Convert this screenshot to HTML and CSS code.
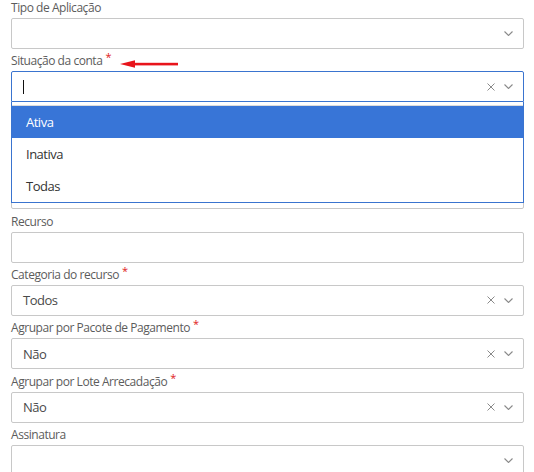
FILE: index.html
```html
<!DOCTYPE html>
<html lang="pt-BR">
<head>
<meta charset="utf-8">
<title>Filtro</title>
<link rel="stylesheet" href="styles.css">
</head>
<body>
<div class="form">
  <div class="field">
    <div class="label">Tipo de Aplicação</div>
    <div class="control">
      <span class="value"></span>
      <svg class="chev" width="9" height="5" viewBox="0 0 9 5"><path d="M0.5 0.5 L4.5 4.5 L8.5 0.5" fill="none" stroke="#8a8a8a" stroke-width="1.1"/></svg>
    </div>
  </div>

  <div class="field open">
    <div class="label">Situação da conta<span class="req">*</span>
      <svg class="arrow" width="60" height="8" viewBox="0 0 60 8"><polygon points="0,4 15,0.3 15,7.7" fill="#e8141b"/><rect x="13" y="2.8" width="45" height="2.6" fill="#e8141b"/></svg>
    </div>
    <div class="select">
      <div class="control focus">
        <span class="value"><span class="caret"></span></span>
        <svg class="x" width="8" height="8" viewBox="0 0 8 8"><path d="M0.5 0.5 L7.5 7.5 M7.5 0.5 L0.5 7.5" stroke="#8a8a8a" stroke-width="1"/></svg>
        <svg class="chev" width="9" height="5" viewBox="0 0 9 5"><path d="M0.5 0.5 L4.5 4.5 L8.5 0.5" fill="none" stroke="#8a8a8a" stroke-width="1.1"/></svg>
      </div>
      <ul class="menu">
        <li class="opt active">Ativa</li>
        <li class="opt">Inativa</li>
        <li class="opt">Todas</li>
      </ul>
    </div>
  </div>

  <div class="field">
    <div class="label"></div>
    <div class="control"></div>
  </div>

  <div class="field">
    <div class="label"></div>
    <div class="control"></div>
  </div>

  <div class="field">
    <div class="label">Recurso</div>
    <div class="control"></div>
  </div>

  <div class="field">
    <div class="label">Categoria do recurso<span class="req">*</span></div>
    <div class="control">
      <span class="value">Todos</span>
      <svg class="x" width="8" height="8" viewBox="0 0 8 8"><path d="M0.5 0.5 L7.5 7.5 M7.5 0.5 L0.5 7.5" stroke="#8a8a8a" stroke-width="1"/></svg>
      <svg class="chev" width="9" height="5" viewBox="0 0 9 5"><path d="M0.5 0.5 L4.5 4.5 L8.5 0.5" fill="none" stroke="#8a8a8a" stroke-width="1.1"/></svg>
    </div>
  </div>

  <div class="field">
    <div class="label">Agrupar por Pacote de Pagamento<span class="req">*</span></div>
    <div class="control">
      <span class="value">Não</span>
      <svg class="x" width="8" height="8" viewBox="0 0 8 8"><path d="M0.5 0.5 L7.5 7.5 M7.5 0.5 L0.5 7.5" stroke="#8a8a8a" stroke-width="1"/></svg>
      <svg class="chev" width="9" height="5" viewBox="0 0 9 5"><path d="M0.5 0.5 L4.5 4.5 L8.5 0.5" fill="none" stroke="#8a8a8a" stroke-width="1.1"/></svg>
    </div>
  </div>

  <div class="field">
    <div class="label">Agrupar por Lote Arrecadação<span class="req">*</span></div>
    <div class="control">
      <span class="value">Não</span>
      <svg class="x" width="8" height="8" viewBox="0 0 8 8"><path d="M0.5 0.5 L7.5 7.5 M7.5 0.5 L0.5 7.5" stroke="#8a8a8a" stroke-width="1"/></svg>
      <svg class="chev" width="9" height="5" viewBox="0 0 9 5"><path d="M0.5 0.5 L4.5 4.5 L8.5 0.5" fill="none" stroke="#8a8a8a" stroke-width="1.1"/></svg>
    </div>
  </div>

  <div class="field">
    <div class="label">Assinatura</div>
    <div class="control">
      <span class="value"></span>
      <svg class="chev" width="9" height="5" viewBox="0 0 9 5"><path d="M0.5 0.5 L4.5 4.5 L8.5 0.5" fill="none" stroke="#8a8a8a" stroke-width="1.1"/></svg>
    </div>
  </div>
</div>
</body>
</html>
```

FILE: styles.css
```css
html, body {
  margin: 0;
  padding: 0;
  background: #fff;
  overflow: hidden;
}

body {
  font-family: "Open Sans", "Noto Sans", "Liberation Sans", sans-serif;
}

.form {
  padding: 0 10px 0 11px;
}

.field {
  margin-bottom: 4.4px;
}

.label {
  position: relative;
  height: 16px;
  line-height: 16px;
  font-size: 12px;
  letter-spacing: -0.45px;
  color: #5c5c5c;
  margin-bottom: 2px;
  white-space: nowrap;
}

.req {
  position: relative;
  top: -4px;
  margin-left: 3px;
  font-size: 11px;
  letter-spacing: 0;
  color: #e02020;
}

.arrow {
  position: absolute;
  left: 109px;
  top: 7px;
}

.control {
  box-sizing: border-box;
  height: 31px;
  border: 1px solid #c8c8c8;
  border-radius: 2px;
  background: #fff;
  display: flex;
  align-items: center;
  padding: 0 10px 0 11px;
}

.control.focus {
  border-color: #3a74cf;
  border-radius: 2px 2px 0 0;
}

.value {
  flex: 1;
  font-size: 13px;
  letter-spacing: -0.5px;
  color: #4a4a4a;
  display: flex;
  align-items: center;
}

.caret {
  display: block;
  width: 1px;
  height: 14px;
  background: #111;
}

.x {
  margin-right: 9px;
}

.select {
  position: relative;
}

.menu {
  position: absolute;
  z-index: 5;
  left: 0;
  right: 0;
  top: 100%;
  margin: 0;
  padding: 3px 0 0;
  list-style: none;
  background: #fff;
  border: 1px solid #3a74cf;
  border-top: none;
}

.menu::before {
  content: "";
  display: block;
  height: 1px;
  background: #dcdcdc;
}

.opt {
  height: 32px;
  line-height: 32px;
  padding-left: 14px;
  font-size: 13px;
  letter-spacing: -0.5px;
  color: #333;
}

.opt.active {
  background: #3875d7;
  color: #fff;
}
```
